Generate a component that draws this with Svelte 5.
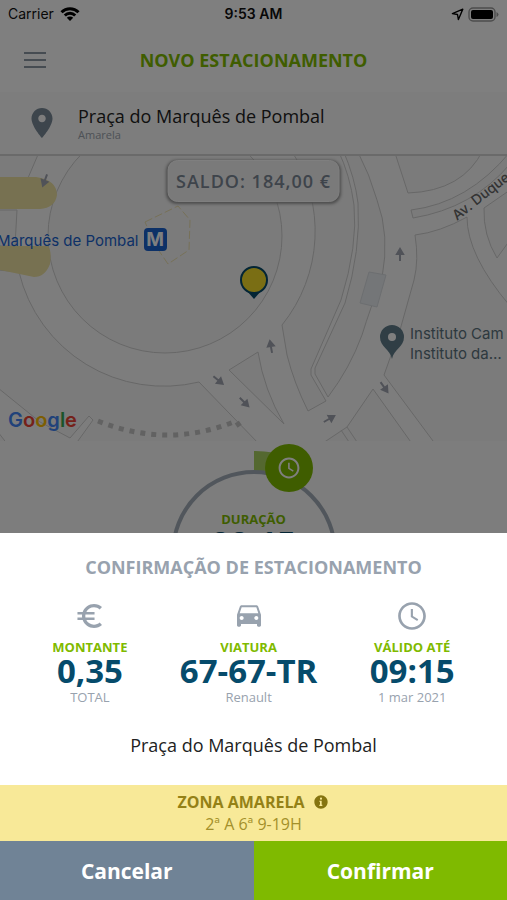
<script lang="ts">
  // Parking confirmation: a bottom sheet over the dimmed "new parking" screen.
  type Detail = { icon: "euro" | "car" | "clock"; label: string; value: string; note: string };

  const place = "Praça do Marquês de Pombal";

  const details: Detail[] = [
    { icon: "euro", label: "MONTANTE", value: "0,35", note: "TOTAL" },
    { icon: "car", label: "VIATURA", value: "67-67-TR", note: "Renault" },
    { icon: "clock", label: "VÁLIDO ATÉ", value: "09:15", note: "1 mar 2021" },
  ];

  const icons = {
    euro: "M15 18.5c-2.51 0-4.68-1.42-5.76-3.5H15.4v-1.8H8.58c-.05-.39-.08-.79-.08-1.2s.03-.81.08-1.2H15.4V9H9.24C10.32 6.92 12.5 5.5 15 5.5c1.61 0 3.09.59 4.23 1.57L21 5.3C19.41 3.87 17.3 3 15 3c-3.92 0-7.24 2.51-8.48 6H2.6v1.8h3.5c-.06.39-.1.79-.1 1.2s.04.81.1 1.2H2.6V15h3.92c1.24 3.49 4.56 6 8.48 6 2.31 0 4.41-.87 6-2.3l-1.78-1.77c-1.13.98-2.6 1.57-4.22 1.57z",
    car: "M18.92 5.01C18.72 4.42 18.16 4 17.5 4h-11c-.66 0-1.21.42-1.42 1.01L3 11v8c0 .55.45 1 1 1h1c.55 0 1-.45 1-1v-1h12v1c0 .55.45 1 1 1h1c.55 0 1-.45 1-1v-8l-2.08-5.99zM6.5 15c-.83 0-1.5-.67-1.5-1.5S5.67 12 6.5 12s1.5.67 1.5 1.5S7.33 15 6.5 15zm11 0c-.83 0-1.5-.67-1.5-1.5s.67-1.5 1.5-1.5 1.5.67 1.5 1.5-.67 1.5-1.5 1.5zM5 10l1.5-4.5h11L19 10H5z",
    clock: "M11.99 1.6C6.27 1.6 1.6 6.28 1.6 12s4.67 10.4 10.39 10.4C17.72 22.4 22.4 17.72 22.4 12S17.72 1.6 11.99 1.6zM12 20.4c-4.64 0-8.4-3.76-8.4-8.4s3.76-8.4 8.4-8.4 8.4 3.76 8.4 8.4-3.76 8.4-8.4 8.4zM12.7 6.8H11.1v6l4.8 2.9.8-1.3-4-2.4z",
    pin: "M12 2C8.13 2 5 5.13 5 9c0 5.25 7 13 7 13s7-7.75 7-13c0-3.87-3.13-7-7-7zm0 9.5c-1.38 0-2.5-1.12-2.5-2.5s1.12-2.5 2.5-2.5 2.5 1.12 2.5 2.5-1.12 2.5-2.5 2.5z",
    info: "M12 2C6.48 2 2 6.48 2 12s4.48 10 10 10 10-4.48 10-10S17.52 2 12 2zm2 16h-4.5v-1.8h1v-4.4h-1V10h3.5v6.2h1zM12 8.6a1.6 1.6 0 1 1 0-3.2 1.6 1.6 0 0 1 0 3.2z",
  };

  // one-way arrows on the roads: x, y, angle (0 points up)
  const arrows = [
    [45, 180, 200],
    [400, 255, 0],
    [271, 347, -10],
    [218, 380, 130],
    [244, 402, 135],
    [329, 419, 60],
    [384, 387, 145],
  ];
</script>

<div class="screen">
  <div class="status">
    <span class="carrier">
      Carrier
      <svg width="20" height="14" viewBox="0 0 20 14" fill="none" stroke="#000" stroke-width="3">
        <path d="M1.5 5.2a12 12 0 0 1 17 0" />
        <path d="M4.8 8.5a7.4 7.4 0 0 1 10.4 0" />
        <path d="M10 14 6.8 10.8a4.6 4.6 0 0 1 6.4 0z" fill="#000" stroke="none" />
      </svg>
    </span>
    <span class="time">9:53 AM</span>
    <span class="power">
      <svg width="13" height="13" viewBox="0 0 13 13" fill="none" stroke="#000" stroke-width="1.4">
        <path d="M11.8 1.2 7.4 11.6 6.5 6.5 1.4 5.6z" stroke-linejoin="round" />
      </svg>
      <svg width="31" height="15" viewBox="0 0 31 15">
        <rect x="1" y="1" width="26" height="13" rx="4" fill="none" stroke="#999" stroke-width="1.4" />
        <rect x="3" y="3" width="22" height="9" rx="2" fill="#000" />
        <path d="M28.5 5v5q2-1 2-2.5t-2-2.5z" fill="#999" />
      </svg>
    </span>
  </div>

  <header class="nav">
    <button type="button" class="menu" aria-label="Menu">
      <span></span><span></span><span></span>
    </button>
    <h1>NOVO ESTACIONAMENTO</h1>
  </header>

  <div class="location">
    <svg class="pin" width="36" height="36" viewBox="0 0 24 24"><path d={icons.pin} /></svg>
    <div>
      <p class="street">{place}</p>
      <p class="zone-name">Amarela</p>
    </div>
  </div>

  <div class="map">
    <svg class="tiles" viewBox="0 156 507 285" preserveAspectRatio="xMidYMid slice">
      <g class="land">
        <path d="M-2 150H40L28 178H-2zM-2 210H17L15 246H-2z" />
        <path d="M-2 270L19 272A149 149 0 0 0 199 382L260 445H75L93 420L89 416L70 438L40 422L-2 388zM-2 432L8 445H-2z" />
        <circle cx="165" cy="236" r="117" />
        <path d="M291 150A149 149 0 0 1 282 325L287 355Q294 383 308 411L326 401L311 375V369L341 300Q358 245 354 205Q350 175 338 150z" />
        <path d="M343 150Q355 178 358 203Q361 250 345 303L315 368V374L328 397Q350 368 362 335Q370 309 382 278Q390 235 377 200Q370 175 357 150z" />
        <path d="M229 370L258 352Q264 390 284 424z" />
        <path d="M394 150L408 193Q463 191 483 150z" />
        <path d="M510 152Q468 203 411 210L413 218Q473 208 510 164z" />
        <path d="M415 235Q440 232 467 217Q467 255 510 306V445H436L384 375L400 330L414 280Q419 260 415 235z" />
        <path d="M484 208Q483 235 497 258L510 240V190z" />
        <path d="M373 389L347 427L320 445H413z" />
      </g>
      <path class="line" d="M347 427L359 445M341 430L351 445" />
      <path d="M369 272L386 275L377 307L360 303z" fill="#e8ecf0" stroke="#d9dde1" />
      <path d="M0 177H36Q57 180 57 195Q55 208 40 209H0zM0 246H48Q52 251 50 264Q45 277 34 277L0 270z" fill="#eee2a2" />
      <path class="fountain" d="M145 222L178 206L190 220L189 250L168 264L155 245z" />
      <path class="steps" d="M98 421Q168 449 236 421L243 431" />
      {#each arrows as [x, y, angle]}
        <path class="arrow" d="M0 6V-5M-3 -1L0 -6L3 -1z" transform="translate({x} {y}) rotate({angle})" />
      {/each}

      <text class="metro" x="-3" y="246">Marquês de Pombal</text>
      <rect x="144" y="228" width="23" height="23" rx="4" fill="#1a63cf" />
      <text class="metro-sign" x="155" y="246">M</text>

      <text class="avenue" transform="translate(457 221) rotate(-38)">Av. Duque</text>

      <path d="M392 359C390 349 380 347 380 337A12 12 0 0 1 404 337C404 347 394 349 392 359z" fill="#607d8b" />
      <circle cx="392" cy="337" r="4" fill="#fff" />
      <text class="poi" x="410" y="339">Instituto Cam</text>
      <text class="poi" x="410" y="359">Instituto da…</text>

      <path d="M247 291L254 299L261 291z" fill="#064b6b" />
      <circle cx="254" cy="280" r="13" fill="#f5dc28" stroke="#064b6b" stroke-width="2" />

      <text class="google" x="8" y="427"><tspan fill="#4285f4">G</tspan><tspan fill="#ea4335">o</tspan><tspan fill="#fbbc05">o</tspan><tspan fill="#4285f4">g</tspan><tspan fill="#34a853">l</tspan><tspan fill="#ea4335">e</tspan></text>
    </svg>
    <div class="balance">SALDO: 184,00 €</div>
  </div>

  <div class="dial">
    <svg width="170" height="110" viewBox="169 441 170 110">
      <path d="M254 451A102 102 0 0 1 290 457L283 476A82 82 0 0 0 254 471z" fill="#a9d161" />
      <circle cx="254" cy="553" r="81" fill="none" stroke="#a3adb8" stroke-width="4" />
      <circle cx="289" cy="468" r="24" fill="#7fba00" />
      <g transform="translate(277 456)" fill="#fff"><path d={icons.clock} /></g>
    </svg>
    <div class="reading">
      <span class="label">DURAÇÃO</span>
      <span class="value">00:15</span>
    </div>
  </div>
</div>

<div class="backdrop">
  <div class="sheet" role="dialog" aria-modal="true" aria-labelledby="sheet-title">
    <h2 id="sheet-title">CONFIRMAÇÃO DE ESTACIONAMENTO</h2>

    <div class="details">
      {#each details as detail}
        <div class="detail">
          <svg width="32" height="32" viewBox="0 0 24 24"><path d={icons[detail.icon]} fill-rule="evenodd" /></svg>
          <span class="label">{detail.label}</span>
          <span class="value">{detail.value}</span>
          <span class="note">{detail.note}</span>
        </div>
      {/each}
    </div>

    <p class="address">{place}</p>

    <div class="tariff">
      <p class="tariff-name">
        ZONA AMARELA
        <svg width="16" height="16" viewBox="0 0 24 24"><path d={icons.info} fill-rule="evenodd" /></svg>
      </p>
      <p class="hours">2ª A 6ª 9-19H</p>
    </div>

    <div class="actions">
      <button type="button" class="cancel">Cancelar</button>
      <button type="button" class="confirm">Confirmar</button>
    </div>
  </div>
</div>

<style>
  :global(body) {
    margin: 0;
    background: #fff;
    font-family: "Open Sans", "Noto Sans", sans-serif;
  }

  h1,
  h2,
  p {
    margin: 0;
  }

  .screen {
    display: flex;
    flex-direction: column;
    height: 100vh;
    overflow: hidden;
    background: #fafafa;
  }

  .status {
    display: grid;
    grid-template-columns: 1fr auto 1fr;
    align-items: center;
    height: 28px;
    padding: 0 8px;
    background: #fff;
    color: #111;
    font: 14px/28px Inter, sans-serif;
  }

  .carrier,
  .power {
    display: flex;
    align-items: center;
    gap: 6px;
  }

  .power {
    justify-content: flex-end;
    gap: 4px;
  }

  .time {
    font-weight: 600;
  }

  .nav {
    display: grid;
    grid-template-columns: 48px 1fr 48px;
    align-items: center;
    height: 64px;
    padding: 0 16px;
    background: #fff;
  }

  .menu {
    display: flex;
    flex-direction: column;
    gap: 5px;
    padding: 8px;
    border: 0;
    background: none;
  }

  .menu span {
    width: 22px;
    height: 2px;
    background: #8d98a4;
  }

  h1 {
    color: #7fba00;
    font-size: 18px;
    line-height: 24px;
    text-align: center;
  }

  .location {
    display: flex;
    align-items: center;
    gap: 18px;
    height: 62px;
    padding: 0 24px;
    border-bottom: 2px solid #d4d4d4;
    background: #fafafa;
  }

  .pin {
    fill: #7a8a98;
  }

  .street {
    color: #222;
    font-size: 18px;
    line-height: 24px;
  }

  .zone-name {
    color: #9aa3ad;
    font-size: 11px;
    line-height: 14px;
  }

  .map {
    position: relative;
    height: 285px;
    overflow: hidden;
    background: #fbfbfb;
  }

  .tiles {
    display: block;
    width: 100%;
    height: 100%;
    font-family: Inter, sans-serif;
  }

  .land,
  .line {
    fill: #f6f6f6;
    stroke: #cfcfcf;
  }

  .fountain {
    fill: none;
    stroke: #eee2b0;
    stroke-dasharray: 8 3;
  }

  .steps {
    fill: none;
    stroke: #c4c4c4;
    stroke-width: 5;
    stroke-dasharray: 5 6;
  }

  .arrow {
    fill: #a0a4b0;
    stroke: #a0a4b0;
    stroke-width: 2;
  }

  .metro {
    fill: #1a63cf;
    font-size: 15px;
  }

  .metro-sign {
    fill: #fff;
    font-size: 19px;
    font-weight: 700;
    text-anchor: middle;
  }

  .avenue {
    fill: #666;
    font-size: 14px;
    font-weight: 500;
  }

  .poi {
    fill: #5c737e;
    font-size: 15px;
  }

  .google {
    font-size: 20px;
    font-weight: 600;
  }

  .balance {
    position: absolute;
    top: 4px;
    left: 50%;
    padding: 8px;
    border: 1px solid #fff;
    border-radius: 10px;
    background: #f5f5f5;
    box-shadow: 0 1px 3px 1px #999;
    color: #7c8896;
    font-size: 18px;
    font-weight: 600;
    line-height: 24px;
    letter-spacing: 1px;
    white-space: nowrap;
    transform: translateX(-50%);
  }

  .dial {
    display: flex;
    flex-direction: column;
    align-items: center;
    height: 200px;
  }

  .dial svg {
    flex: none;
  }

  .reading {
    display: flex;
    flex-direction: column;
    align-items: center;
    margin-top: -40px;
  }

  .backdrop {
    position: fixed;
    inset: 0;
    display: flex;
    flex-direction: column;
    justify-content: flex-end;
    background: rgba(0, 0, 0, 0.5);
  }

  .sheet {
    background: #fff;
    text-align: center;
  }

  h2 {
    padding-top: 22px;
    color: #98a2ae;
    font-size: 18px;
    line-height: 24px;
  }

  .details {
    display: flex;
    justify-content: space-evenly;
    padding: 21px 0 26px;
  }

  .detail {
    display: flex;
    flex-direction: column;
    align-items: center;
  }

  .detail svg {
    margin-bottom: 7px;
    fill: #98a2ae;
  }

  .label {
    color: #7fba00;
    font-size: 13px;
    font-weight: 700;
    line-height: 16px;
  }

  .value {
    color: #064b6b;
    font-size: 33px;
    font-weight: 700;
    line-height: 32px;
  }

  .note {
    color: #98a2ae;
    font-size: 13px;
    line-height: 20px;
  }

  .address {
    padding-bottom: 28px;
    color: #222;
    font-size: 18px;
    line-height: 24px;
  }

  .tariff {
    padding: 6px 0;
    background: #f8e998;
    color: #a3902a;
  }

  .tariff p {
    font-size: 16px;
    line-height: 22px;
  }

  .tariff .tariff-name {
    display: flex;
    align-items: center;
    justify-content: center;
    gap: 9px;
    color: #948116;
    font-weight: 700;
  }

  .tariff-name svg {
    fill: #857410;
  }

  .actions {
    display: grid;
    grid-template-columns: 1fr 1fr;
  }

  .actions button {
    height: 59px;
    border: 0;
    color: #fff;
    font: 700 21px/24px "Open Sans", "Noto Sans", sans-serif;
    cursor: pointer;
  }

  .cancel {
    background: #708396;
  }

  .confirm {
    background: #7fba00;
  }
</style>
